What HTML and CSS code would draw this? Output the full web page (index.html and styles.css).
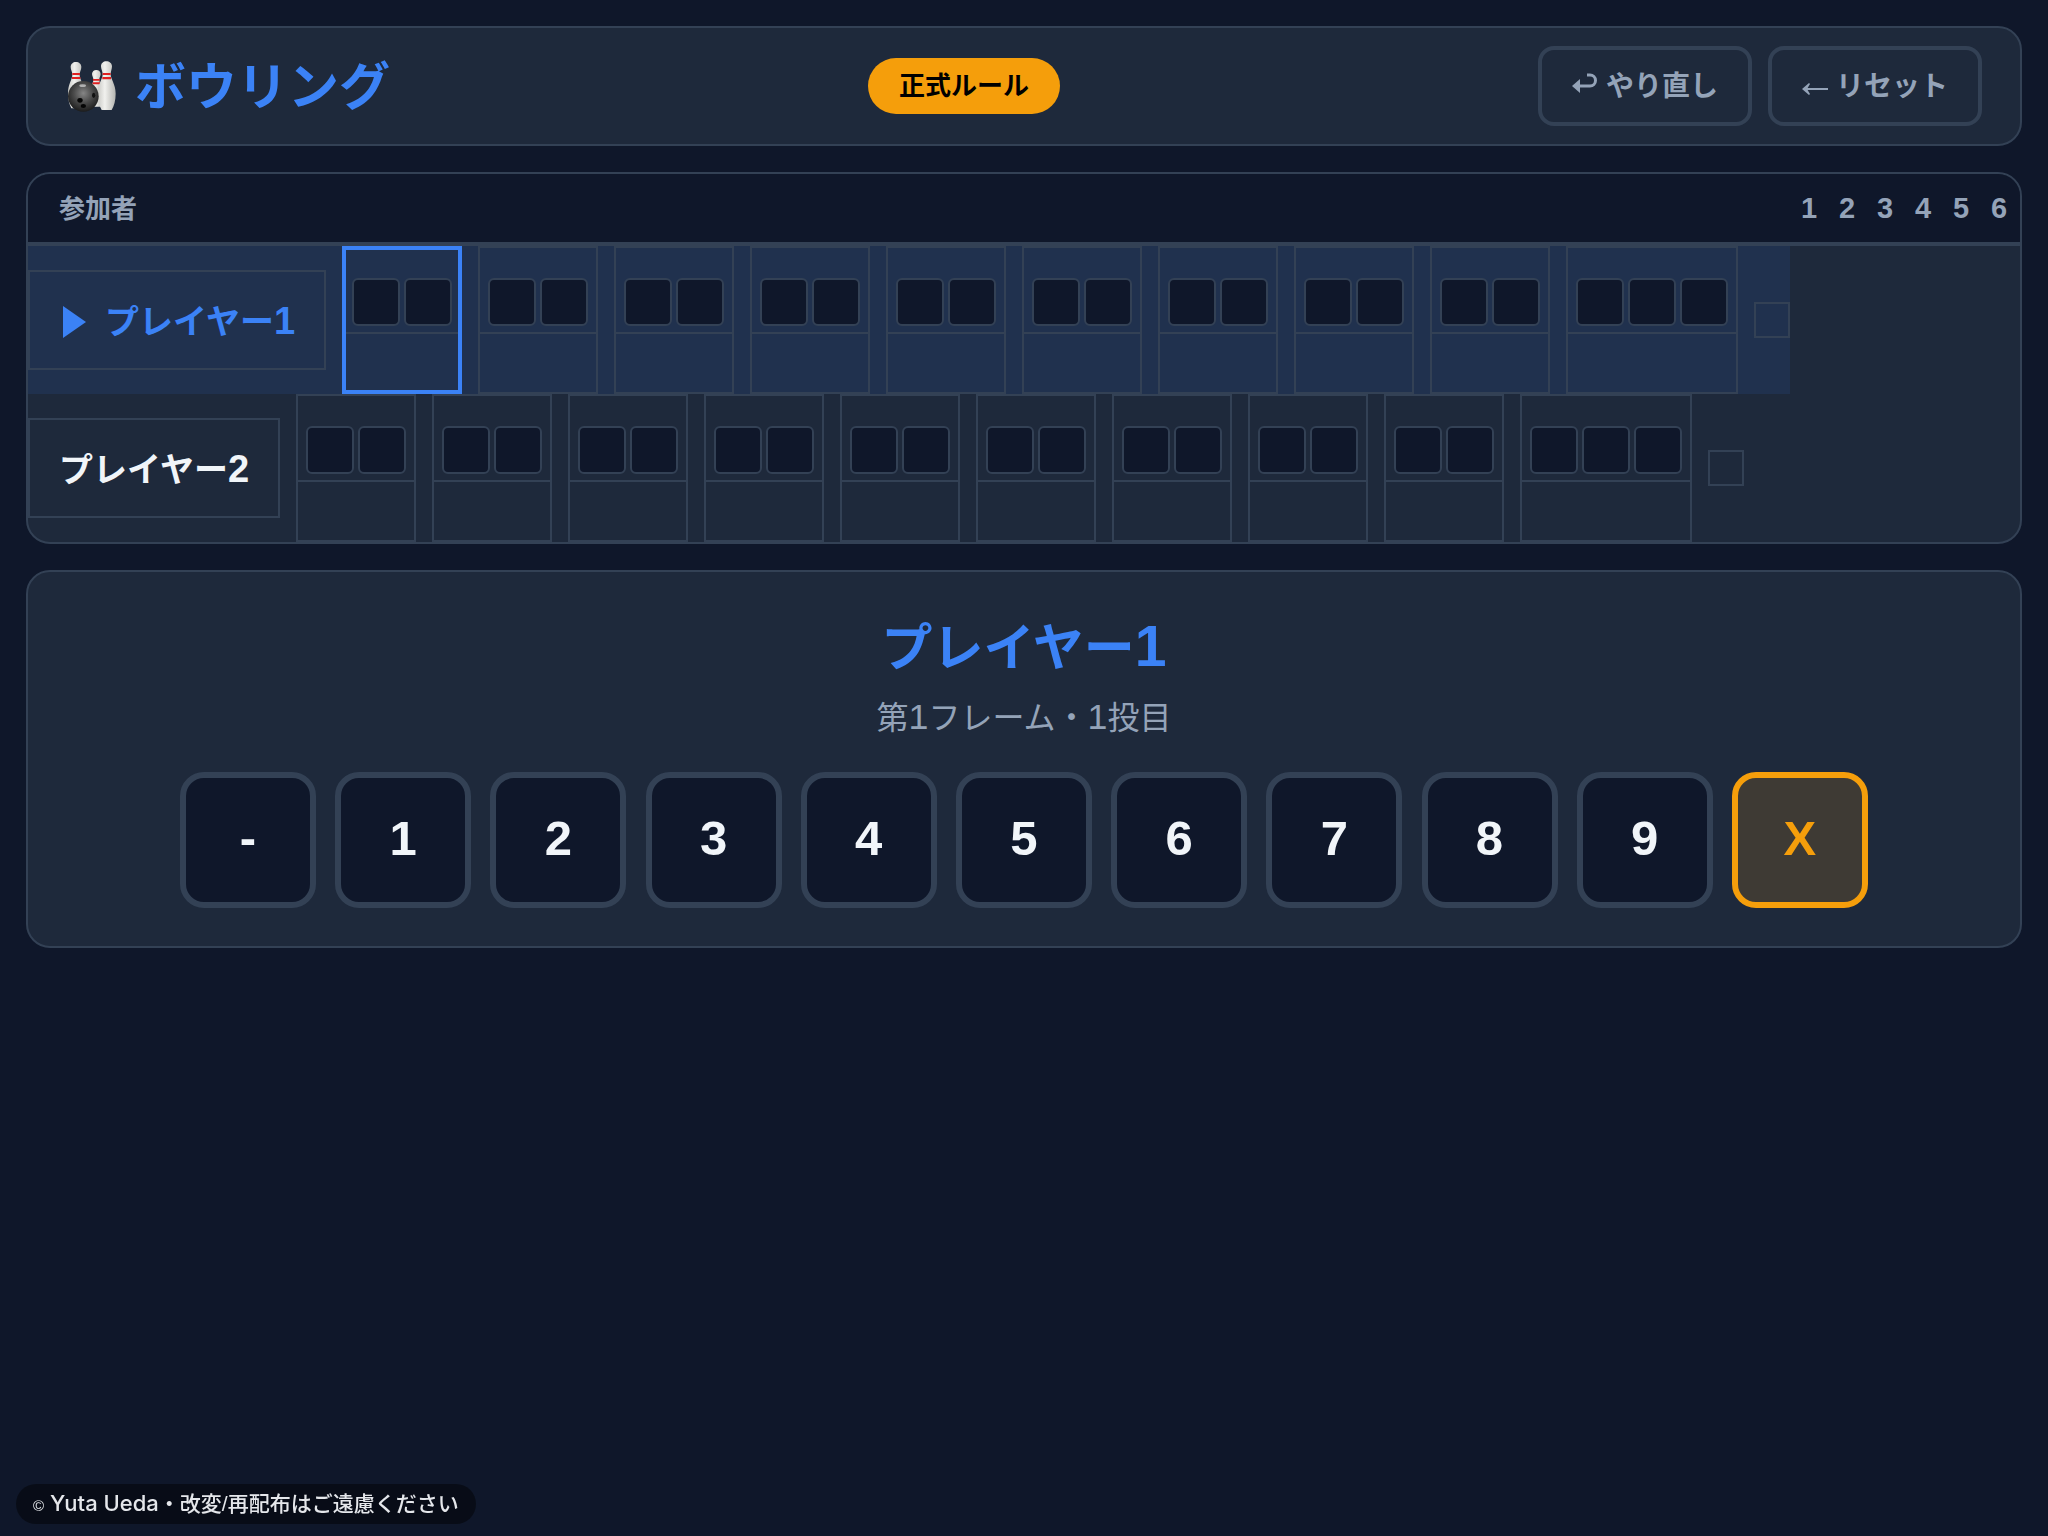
FILE: index.html
```
<!DOCTYPE html>
<html lang="ja">
    <head>
        <meta charset="UTF-8">
        <title>ボウリング</title>
        <link rel="stylesheet" href="styles.css">
    </head>
    <body>

        <header class="card header">
            <h1 class="title">
                <svg class="title__icon" viewBox="30 30 156 156" aria-hidden="true">
                    <defs>
                        <linearGradient id="pin" x1="0" x2="1">
                            <stop offset="0" stop-color="#c9c9c5"/>
                            <stop offset="0.4" stop-color="#f1f1ee"/>
                            <stop offset="1" stop-color="#b4b4b0"/>
                        </linearGradient>
                        <radialGradient id="ball" cx="0.5" cy="0.4" r="0.6">
                            <stop offset="0" stop-color="#858585"/>
                            <stop offset="0.5" stop-color="#4c4c4c"/>
                            <stop offset="1" stop-color="#1c1c1c"/>
                        </radialGradient>
                    </defs>
                    <path fill="url(#pin)" d="M60 36c-9 0-16 6-16 15 0 8 5 14 5 23 0 14-13 28-13 54 0 20 4 36 10 47h28c6-11 10-27 10-47 0-26-13-40-13-54 0-9 5-15 5-23 0-9-7-15-16-15z"/>
                    <path fill="#e02020" d="M49 69h23v6H49zM48 81h25v6H48z"/>
                    <path fill="url(#pin)" d="M121 60c-7 0-13 5-13 12s5 11 4 19c-1 12-12 24-12 46 0 14 3 25 8 33h26c5-8 8-19 8-33 0-22-11-34-12-46-1-8 4-12 4-19 0-7-6-12-13-12z"/>
                    <path fill="#e02020" d="M111 87h20v5h-20zM110 97h22v6h-22z"/>
                    <path fill="url(#pin)" d="M151 34c-9 0-16 6-16 15 0 9 5 15 5 24 0 15-15 30-15 58 0 20 5 37 12 49h30c7-12 12-29 12-49 0-28-15-43-15-58 0-9 4-15 4-24 0-9-8-15-17-15z"/>
                    <path fill="#e02020" d="M140 69h24v6h-24zM139 81h26v7h-26z"/>
                    <circle cx="82" cy="139" r="46" fill="url(#ball)"/>
                    <ellipse cx="80" cy="107" rx="10" ry="4" fill="#b0b0b0"/>
                    <ellipse cx="72" cy="151" rx="8" ry="7" fill="#050505"/>
                    <ellipse cx="82" cy="168" rx="8" ry="6" fill="#050505"/>
                    <ellipse cx="113" cy="136" rx="5" ry="8" fill="#111111"/>
                </svg>
                <span class="title__text">ボウリング</span>
            </h1>
            <span class="rule">正式ルール</span>
            <div class="actions">
                <button type="button" class="action">
                    <svg class="action__icon" viewBox="0 0 26 28" aria-hidden="true">
                        <path d="M15 3h3a5.500 5.500 0 0 1 0 11H6" fill="none" stroke="currentColor" stroke-width="3"/>
                        <path d="M0 14l8-7v14z" fill="currentColor"/>
                    </svg>
                    <span class="action__text">やり直し</span>
                </button>
                <button type="button" class="action">
                    <svg class="action__icon" viewBox="0 0 26 28" aria-hidden="true">
                        <path d="M2 17h24" fill="none" stroke="currentColor" stroke-width="2"/>
                        <path d="M0 17l7-6 1 1-3 5 3 5-1 1z" fill="currentColor"/>
                    </svg>
                    <span class="action__text">リセット</span>
                </button>
            </div>
        </header>

        <section class="card board">
            <table class="score">
                <thead>
                    <tr class="score__head">
                        <th class="score__label">参加者</th>
                        <th class="score__number">1</th>
                        <th class="score__number">2</th>
                        <th class="score__number">3</th>
                        <th class="score__number">4</th>
                        <th class="score__number">5</th>
                        <th class="score__number">6</th>
                    </tr>
                </thead>
                <tbody>
                    <tr class="player player--active">
                        <th class="player__name">
                            <svg class="player__mark" viewBox="0 0 28 32" aria-hidden="true"><path d="M4 0l23 16L4 32z" fill="currentColor"/></svg>
                            <span>プレイヤー<span class="num">1</span></span>
                        </th>
                        <td class="frame frame--current"><div class="rolls"><span class="roll"></span><span class="roll"></span></div><div class="sum"></div></td>
                        <td class="frame"><div class="rolls"><span class="roll"></span><span class="roll"></span></div><div class="sum"></div></td>
                        <td class="frame"><div class="rolls"><span class="roll"></span><span class="roll"></span></div><div class="sum"></div></td>
                        <td class="frame"><div class="rolls"><span class="roll"></span><span class="roll"></span></div><div class="sum"></div></td>
                        <td class="frame"><div class="rolls"><span class="roll"></span><span class="roll"></span></div><div class="sum"></div></td>
                        <td class="frame"><div class="rolls"><span class="roll"></span><span class="roll"></span></div><div class="sum"></div></td>
                        <td class="frame"><div class="rolls"><span class="roll"></span><span class="roll"></span></div><div class="sum"></div></td>
                        <td class="frame"><div class="rolls"><span class="roll"></span><span class="roll"></span></div><div class="sum"></div></td>
                        <td class="frame"><div class="rolls"><span class="roll"></span><span class="roll"></span></div><div class="sum"></div></td>
                        <td class="frame"><div class="rolls"><span class="roll"></span><span class="roll"></span><span class="roll"></span></div><div class="sum"></div></td>
                        <td class="total"></td>
                    </tr>
                    <tr class="player">
                        <th class="player__name"><span>プレイヤー<span class="num">2</span></span></th>
                        <td class="frame"><div class="rolls"><span class="roll"></span><span class="roll"></span></div><div class="sum"></div></td>
                        <td class="frame"><div class="rolls"><span class="roll"></span><span class="roll"></span></div><div class="sum"></div></td>
                        <td class="frame"><div class="rolls"><span class="roll"></span><span class="roll"></span></div><div class="sum"></div></td>
                        <td class="frame"><div class="rolls"><span class="roll"></span><span class="roll"></span></div><div class="sum"></div></td>
                        <td class="frame"><div class="rolls"><span class="roll"></span><span class="roll"></span></div><div class="sum"></div></td>
                        <td class="frame"><div class="rolls"><span class="roll"></span><span class="roll"></span></div><div class="sum"></div></td>
                        <td class="frame"><div class="rolls"><span class="roll"></span><span class="roll"></span></div><div class="sum"></div></td>
                        <td class="frame"><div class="rolls"><span class="roll"></span><span class="roll"></span></div><div class="sum"></div></td>
                        <td class="frame"><div class="rolls"><span class="roll"></span><span class="roll"></span></div><div class="sum"></div></td>
                        <td class="frame"><div class="rolls"><span class="roll"></span><span class="roll"></span><span class="roll"></span></div><div class="sum"></div></td>
                        <td class="total"></td>
                    </tr>
                </tbody>
            </table>
        </section>

        <section class="card turn">
            <h2 class="turn__name">プレイヤー<span class="num">1</span></h2>
            <p class="turn__info">第<span class="num">1</span>フレーム・<span class="num">1</span>投目</p>
            <div class="keys">
                <button type="button" class="key">-</button>
                <button type="button" class="key">1</button>
                <button type="button" class="key">2</button>
                <button type="button" class="key">3</button>
                <button type="button" class="key">4</button>
                <button type="button" class="key">5</button>
                <button type="button" class="key">6</button>
                <button type="button" class="key">7</button>
                <button type="button" class="key">8</button>
                <button type="button" class="key">9</button>
                <button type="button" class="key key--strike">X</button>
            </div>
        </section>

        <footer class="credit"><span class="credit__mark">©</span> <span class="credit__name">Yuta Ueda</span>・改変/再配布はご遠慮ください</footer>

    </body>
</html>
```
FILE: styles.css
```
*{
    box-sizing: border-box;
    margin: 0;
    padding: 0;
}
body{
    min-height: 100vh;
    padding: 26px;
    display: flex;
    flex-direction: column;
    gap: 26px;
    background: #0f172a;
    color: #f1f5f9;
    font-family: "Liberation Sans", "Noto Sans CJK JP", sans-serif;
}
button{
    font-family: inherit;
    font-weight: bold;
}
.card{
    background: #1e293b;
    border: 2px solid #334155;
    border-radius: 24px;
}
/* Latin digits are drawn a little larger than the kana */
.num{
    font-size: 1.12em;
    line-height: 1;
}

.header{
    display: flex;
    justify-content: space-between;
    align-items: center;
    padding: 18px 38px;
}
.title{
    display: flex;
    align-items: center;
    gap: 17px;
    font-size: 51px;
    line-height: 64px;
    color: #3b82f6;
}
.title__icon{
    width: 52px;
    height: 52px;
}
.title__text{
    padding-top: 4px;
}
.rule{
    padding: 0 31px;
    border-radius: 28px;
    background: #f59e0b;
    color: #000;
    font-size: 26px;
    font-weight: bold;
    line-height: 56px;
}
.actions{
    display: flex;
    gap: 16px;
}
.action{
    display: flex;
    align-items: center;
    justify-content: center;
    gap: 8px;
    min-width: 214px;
    height: 80px;
    padding: 0 24px;
    border: 4px solid #334155;
    border-radius: 16px;
    background: transparent;
    color: #94a3b8;
    font-size: 28px;
}
.action__icon{
    width: 26px;
    height: 28px;
}
.action__text{
    padding-bottom: 4px;
}

.board{
    overflow: hidden;
}
.score, .score thead, .score tbody{
    display: block;
}
.score__head{
    display: flex;
    align-items: center;
    height: 72px;
    padding: 0 2px 0 31px;
    background: #0f172a;
    border-bottom: 4px solid #334155;
    color: #94a3b8;
}
.score__label{
    flex: 1;
    padding-bottom: 4px;
    text-align: left;
    font-size: 26px;
}
.score__number{
    width: 38px;
    font-size: 29px;
}
.player{
    display: flex;
    align-items: center;
    gap: 16px;
    width: max-content;
}
.player--active{
    background: rgba(59, 130, 246, 0.1);
}
.player__name{
    display: flex;
    align-items: center;
    gap: 18px;
    height: 100px;
    padding: 4px 29px 0;
    border: 2px solid #334155;
    font-size: 34px;
    line-height: 40px;
}
.player--active .player__name{
    color: #3b82f6;
}
.player__mark{
    width: 28px;
    height: 32px;
}
.frame{
    border: 2px solid #334155;
}
.frame--current{
    outline: 4px solid #3b82f6;
    outline-offset: -4px;
}
.rolls{
    display: flex;
    gap: 4px;
    padding: 30px 8px 6px;
}
.roll{
    width: 48px;
    height: 48px;
    background: #0f172a;
    border: 2px solid #334155;
    border-radius: 6px;
}
.sum{
    height: 60px;
    border-top: 2px solid #334155;
}
.total{
    width: 36px;
    height: 36px;
    border: 2px solid #334155;
}

.turn{
    display: flex;
    flex-direction: column;
    align-items: center;
    padding: 40px 38px 38px;
}
.turn__name{
    margin-bottom: 8px;
    color: #3b82f6;
    font-size: 51px;
    line-height: 74px;
}
.turn__info{
    margin-bottom: 30px;
    color: #94a3b8;
    font-size: 32px;
    line-height: 48px;
}
.keys{
    display: flex;
    flex-wrap: wrap;
    justify-content: space-between;
    width: 100%;
    max-width: 1688px;
}
.key{
    width: 136px;
    height: 136px;
    padding-bottom: 4px;
    border: 6px solid #334155;
    border-radius: 24px;
    background: #0f172a;
    color: #f1f5f9;
    font-size: 49px;
}
.key--strike{
    border-color: #f59e0b;
    background: rgba(245, 158, 11, 0.15);
    color: #f59e0b;
}

.credit{
    position: fixed;
    left: 16px;
    bottom: 12px;
    padding: 0 17px;
    border-radius: 20px;
    background: rgba(0, 0, 0, 0.45);
    color: #e5e7eb;
    font-size: 21px;
    font-weight: 500;
    line-height: 40px;
}
.credit__mark{
    font-size: 15px;
    line-height: 1;
}
.credit__name{
    font-family: "Inter", sans-serif;
    font-size: 22px;
    line-height: 1;
}
```
